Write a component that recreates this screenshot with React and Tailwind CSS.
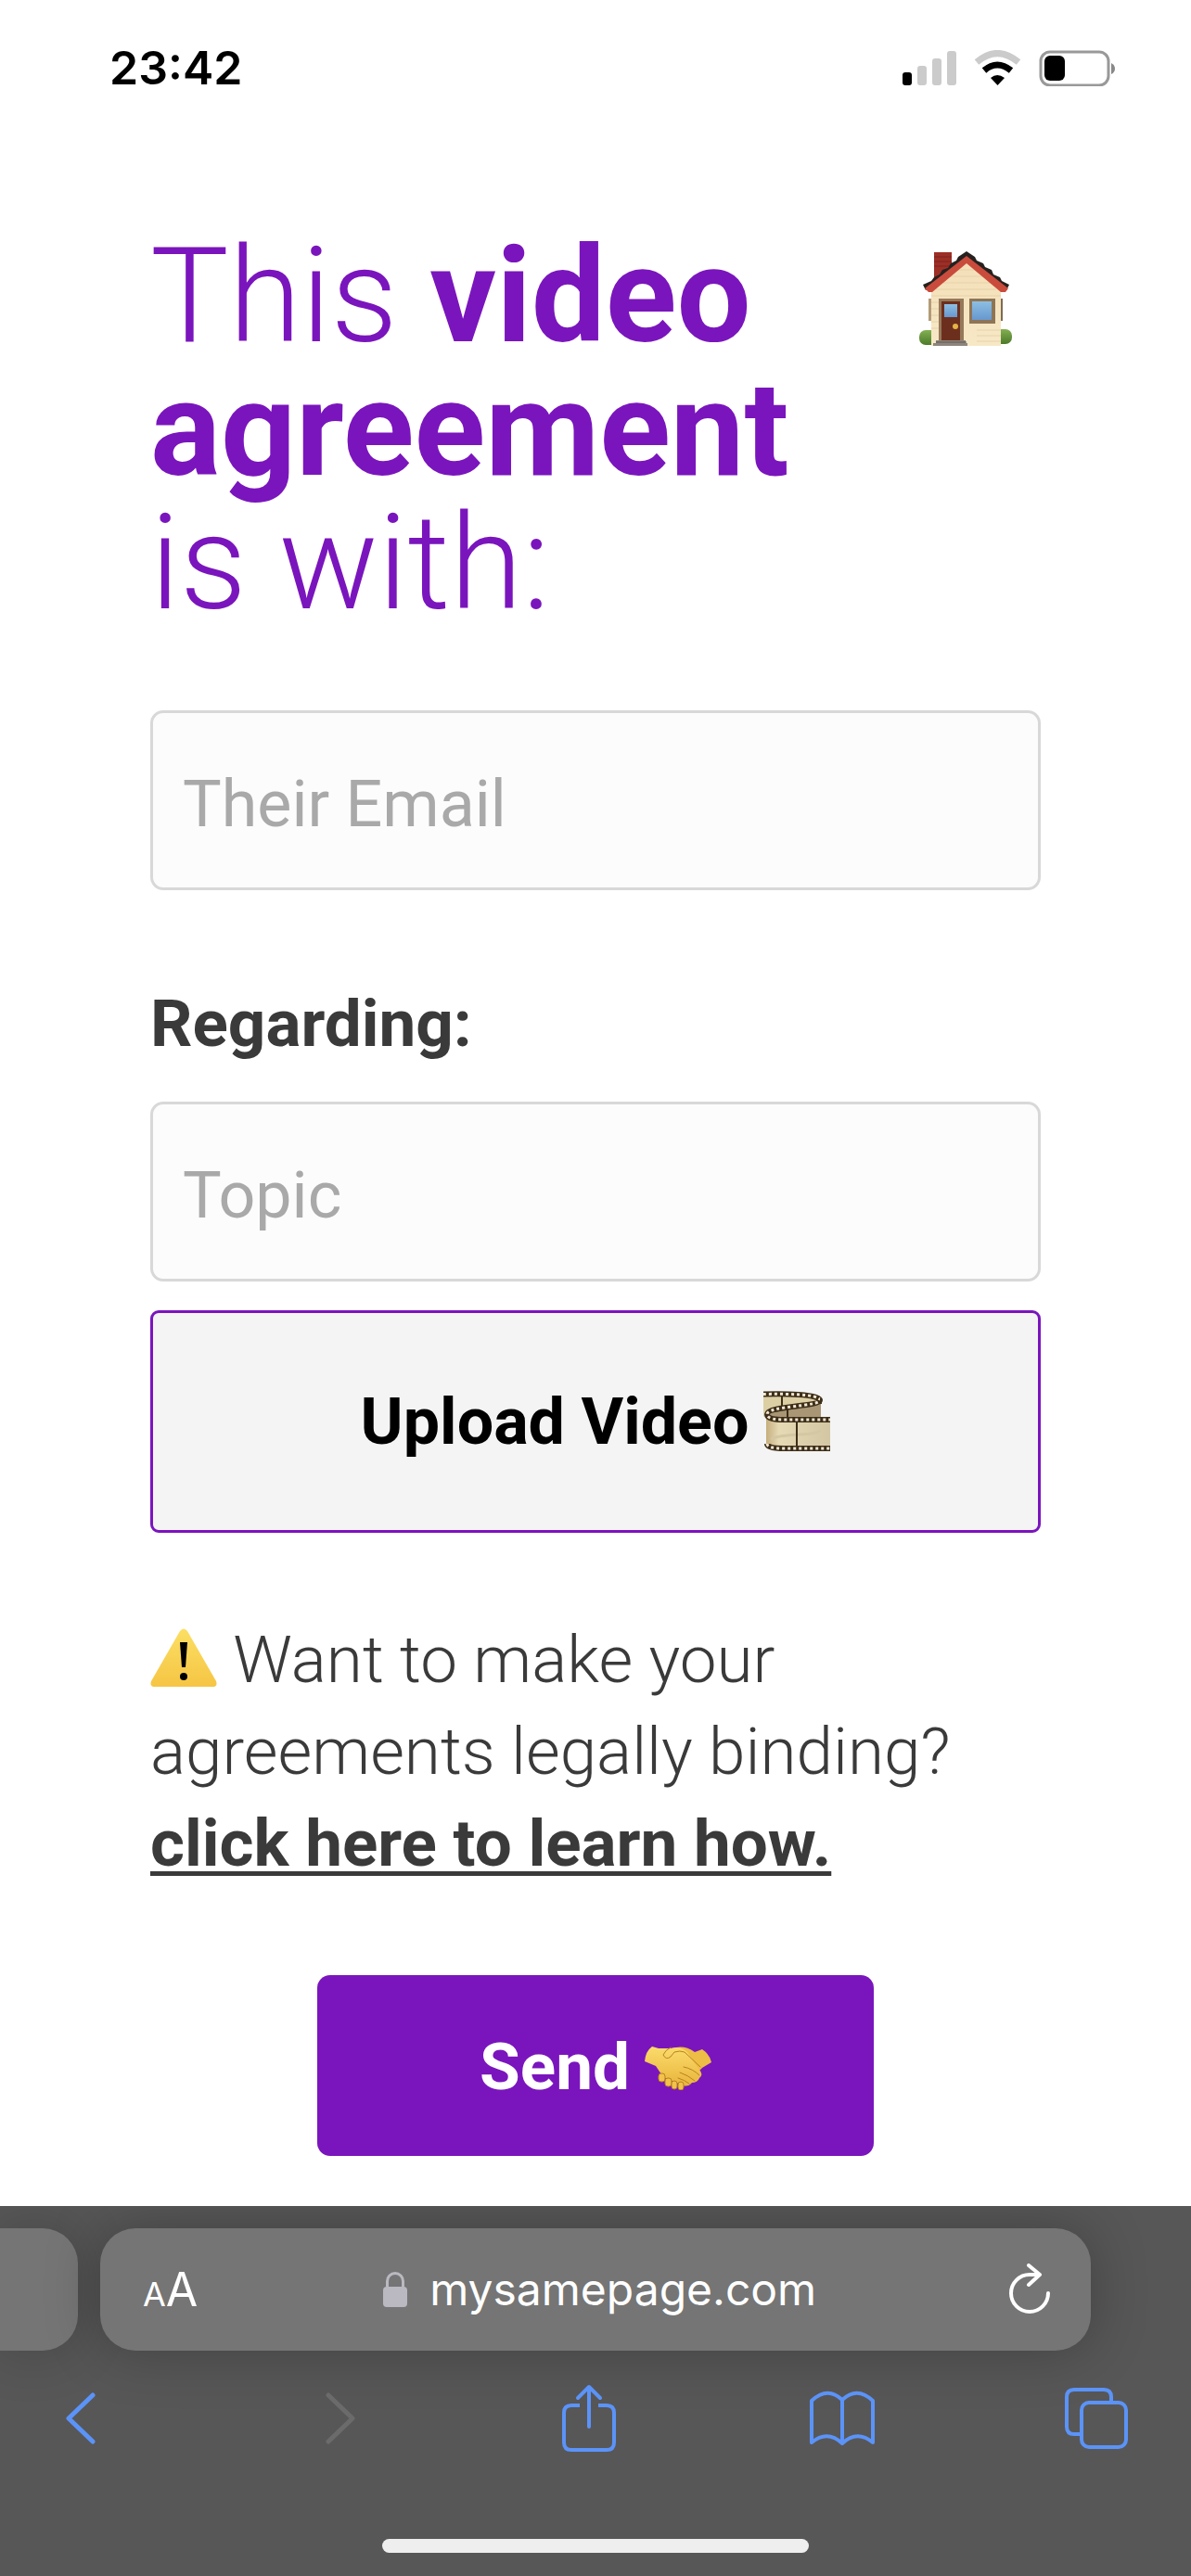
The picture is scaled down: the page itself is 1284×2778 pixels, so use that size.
import React, { useState } from "react";

function HouseIcon() {
  return (
    <svg viewBox="0 0 100 102" className="h-[102px] w-[100px]" aria-hidden="true">
      <defs>
        <linearGradient id="wall" x1="0" y1="0" x2="0" y2="1">
          <stop offset="0" stopColor="#f3dfb8" />
          <stop offset="1" stopColor="#f7e8c6" />
        </linearGradient>
        <linearGradient id="glass" x1="0" y1="0" x2="0" y2="1">
          <stop offset="0" stopColor="#8dbfe2" />
          <stop offset="1" stopColor="#6797cf" />
        </linearGradient>
        <linearGradient id="bush" x1="0" y1="0" x2="0" y2="1">
          <stop offset="0" stopColor="#83b052" />
          <stop offset="1" stopColor="#4c7a28" />
        </linearGradient>
      </defs>
      <rect x="0" y="85" width="20" height="16" rx="7" fill="url(#bush)" />
      <rect x="80" y="84" width="20" height="16" rx="7" fill="url(#bush)" />
      <rect x="10" y="51" width="4" height="24" fill="#b39b78" />
      <rect x="86" y="51" width="4" height="24" fill="#7d6b52" />
      <rect x="16" y="1" width="19" height="30" fill="#9c2f26" />
      <path d="M16 6h19M16 11h19M16 16h19" stroke="#7d221c" strokeWidth="1" />
      <path d="M51 10L13 42v60h75V42z" fill="url(#wall)" />
      <path d="M42 20h18M34 27h34M26 34h50M18 41h65M13 48h75M62 85h26M62 91h26M62 97h26M13 55h8M13 62h8M13 69h8M13 76h8M13 83h8" stroke="#e6d2a8" strokeWidth="1" />
      <path d="M51 0L42 6l-2 4-6 3-3 5-6 2-3 5-6 3-3 4-9 4 3 6L51 9l43 33 3-6-8-4-2-4-7-3-2-5-7-3-2-4-7-3-2-4z" fill="#26211f" />
      <path d="M51 5L6 40l4 4h4L51 13l37 31h5l3-4z" fill="#c94b3c" />
      <rect x="21" y="51" width="27" height="46" fill="#95795a" />
      <rect x="24" y="54" width="20" height="43" fill="#6d2f1d" />
      <rect x="27" y="57" width="14" height="14" fill="url(#glass)" />
      <circle cx="39" cy="81" r="3" fill="#e5b347" />
      <rect x="54" y="51" width="28" height="27" fill="#8d7556" />
      <rect x="57" y="54" width="21" height="20" fill="url(#glass)" />
      <path d="M18 96h32v3h2v3H15v-3h3z" fill="#8d857d" />
      <path d="M18 98h33" stroke="#5e5751" strokeWidth="1" />
    </svg>
  );
}

function FilmIcon() {
  return (
    <svg viewBox="0 0 72 66" className="h-[66px] w-[72px]" aria-hidden="true">
      <defs>
        <linearGradient id="film" x1="0" y1="0" x2="1" y2="0">
          <stop offset="0" stopColor="#c6ae7d" />
          <stop offset=".2" stopColor="#e6dab5" />
          <stop offset="1" stopColor="#d3c6a2" />
        </linearGradient>
      </defs>
      <path d="M0 3C20 1 62 2 62 12v40H4V24L0 28z" fill="#ddcfa4" />
      <path d="M6 24C20 14 62 20 62 10v38H6z" fill="#a89675" />
      <path d="M3 26C5 30 12 32 22 32h50v31H20C8 63 3 60 3 56z" fill="url(#film)" />
      <path d="M8 52C24 44 58 50 61 42" fill="none" stroke="#d4c7a3" strokeWidth="3" />
      <path d="M0 3.500C20 3 61 3 61 10S4 16 4 25c0 5 8 6 18 6h50" fill="none" stroke="#3d2e18" strokeWidth="6" />
      <path d="M0 3.500C20 3 61 3 61 10S4 16 4 25c0 5 8 6 18 6h50" fill="none" stroke="#f0e8d5" strokeWidth="3" strokeDasharray="3 3" />
      <path d="M4 57c0 4 8 5 18 5h50" fill="none" stroke="#3d2e18" strokeWidth="6" />
      <path d="M4 57c0 4 8 5 18 5h50" fill="none" stroke="#f0e8d5" strokeWidth="3" strokeDasharray="3 3" />
      <path d="M36 34v26M20 6v10M26 20v8M62 8v6" stroke="#3d2e18" strokeWidth="2" />
    </svg>
  );
}

function WarningIcon() {
  return (
    <svg viewBox="0 0 72 64" className="inline-block h-[64px] w-[72px] align-[-6px]" aria-hidden="true">
      <defs>
        <linearGradient id="warn" x1="0" y1="0" x2="0" y2="1">
          <stop offset="0" stopColor="#fbdf63" />
          <stop offset="1" stopColor="#f6c544" />
        </linearGradient>
      </defs>
      <path d="M32 3q4-5 8 0l31 54q2 6-4 6H5q-6 0-4-6z" fill="url(#warn)" />
      <path d="M32 15h8l-2 27h-4z" fill="#000" />
      <circle cx="36" cy="52" r="4" fill="#000" />
    </svg>
  );
}

function HandshakeIcon() {
  return (
    <svg viewBox="0 0 72 48" className="h-[48px] w-[72px]" aria-hidden="true">
      <defs>
        <linearGradient id="hand" x1="0" y1="0" x2="0" y2="1">
          <stop offset="0" stopColor="#fbdb6c" />
          <stop offset="1" stopColor="#e9b53c" />
        </linearGradient>
      </defs>
      <path d="M34 2q10-2 20 5l8-3q8 5 10 14l-10 6-8 8-26-8z" fill="#eebd45" />
      <path d="M0 17Q1 6 8 1l7 2h13q10-3 18 4l12 18q6 6 1 10-2 5-8 5-4 5-10 3L20 34 12 22z" fill="url(#hand)" />
      <g fill="#f2c24b" stroke="#b9811f" strokeWidth="1">
        <rect x="15" y="30" width="7" height="9" rx="3" />
        <rect x="22" y="35" width="7" height="9" rx="3" />
        <rect x="29" y="38" width="6" height="9" rx="3" />
        <rect x="36" y="39" width="6" height="9" rx="3" />
      </g>
      <path d="M28 2q-6 3-8 8 3 6 8 2l4-5q6-2 11 0l17 16M42 23q10 2 17 9M38 29q9 3 16 9M36 35q7 2 12 6" fill="none" stroke="#b9811f" strokeWidth="1" strokeLinecap="round" />
    </svg>
  );
}

function StatusBar() {
  return (
    <div className="flex items-center justify-between pl-[118px] pr-[82px] pt-[42px] font-['Inter',sans-serif] text-black">
      <span className="text-[50px] font-semibold leading-[62px]">23:42</span>
      <svg viewBox="0 0 229 39" className="h-[39px] w-[229px]" aria-hidden="true">
        <rect x="0" y="24" width="10" height="14" rx="3" />
        <g fill="#cbcbcb">
          <rect x="16" y="17" width="10" height="21" rx="3" />
          <rect x="32" y="9" width="10" height="29" rx="3" />
          <rect x="48" y="1" width="10" height="37" rx="3" />
        </g>
        <path d="M80 13Q102 -6 125 13" fill="none" stroke="#cbcbcb" strokeWidth="7" />
        <path d="M88 22Q102 10 117 22" fill="none" stroke="#000" strokeWidth="7" />
        <path d="M95 30Q102 24 110 30L102.500 38z" />
        <rect x="149" y="2" width="73" height="36" rx="10" fill="none" stroke="#999" strokeWidth="3" />
        <rect x="153" y="6" width="22" height="27" rx="6" />
        <path d="M225 14q4 2 4 6t-4 6z" fill="#888" />
      </svg>
    </div>
  );
}

function BrowserBar() {
  return (
    <div className="mt-[54px] flex-1 overflow-hidden bg-[#575757] pt-6 font-['Inter',sans-serif] text-white">
      <div className="flex gap-6 pr-[108px]">
        <div className="h-[132px] w-[84px] shrink-0 rounded-r-[38px] bg-[#757575] shadow-[0_0_60px_rgba(0,0,0,0.2)]" />
        <div className="flex h-[132px] flex-1 items-center justify-between rounded-[38px] bg-[#757575] pl-[46px] pr-[44px] shadow-[0_0_60px_rgba(0,0,0,0.25)]">
          <button aria-label="Page settings" className="flex items-baseline">
            <span className="text-[36px]">A</span>
            <span className="text-[50px]">A</span>
          </button>
          <div className="mr-2 flex items-center gap-6">
            <svg viewBox="0 0 26 38" className="h-[38px] w-[26px]" aria-hidden="true">
              <rect x="0" y="16" width="26" height="22" rx="4" fill="#bab9c1" />
              <path d="M4.500 17V10a8.500 8.500 0 0 1 17 0v7" fill="none" stroke="#bab9c1" strokeWidth="3" />
            </svg>
            <a href="#" className="text-[48px] leading-[60px]">mysamepage.com</a>
          </div>
          <button aria-label="Reload">
            <svg viewBox="0 0 44 56" className="h-[56px] w-[44px]" fill="none" stroke="currentColor" strokeWidth="4" strokeLinecap="round" strokeLinejoin="round">
              <path d="M42 32A20 20 0 1 1 22 12h10" />
              <path d="M21 2l12 10-12 11" />
            </svg>
          </button>
        </div>
      </div>

      <nav className="mt-[36px] flex items-center justify-between pl-[51px] pr-[66px]">
        <button aria-label="Back" className="flex w-[72px] justify-center text-[#5b93f8]">
          <svg viewBox="0 0 32 56" className="h-[56px] w-[32px]" fill="none" stroke="currentColor" strokeWidth="5" strokeLinecap="round" strokeLinejoin="round">
            <path d="M29 3L3 28l26 25" />
          </svg>
        </button>
        <button aria-label="Forward" className="flex w-[72px] justify-center text-[#6b6b6b]">
          <svg viewBox="-12 0 44 56" className="h-[56px] w-[44px]" fill="none" stroke="currentColor" strokeWidth="5" strokeLinecap="round" strokeLinejoin="round">
            <path d="M3 3l26 25L3 53" />
          </svg>
        </button>
        <button aria-label="Share" className="flex w-[72px] justify-center text-[#5b93f8]">
          <svg viewBox="0 0 58 74" className="h-[74px] w-[58px]" fill="none" stroke="currentColor" strokeWidth="4" strokeLinecap="round" strokeLinejoin="round">
            <path d="M19 23h-9q-8 0-8 8v32q0 8 8 8h38q8 0 8-8V31q0-8-8-8h-9" strokeLinecap="butt" />
            <path d="M29 46V3M17 15L29 3l12 12" />
          </svg>
        </button>
        <button aria-label="Bookmarks" className="flex w-[72px] justify-center text-[#5b93f8]">
          <svg viewBox="0 0 72 60" className="h-[60px] w-[72px]" fill="none" stroke="currentColor" strokeWidth="4" strokeLinecap="round" strokeLinejoin="round">
            <path d="M36 10v47Q20 42 3 56V11Q20-5 36 10Q52-5 69 11v45Q52 42 36 57" />
          </svg>
        </button>
        <button aria-label="Tabs" className="flex w-[72px] justify-center text-[#5b93f8]">
          <svg viewBox="0 0 68 68" className="h-[68px] w-[68px]" fill="none" stroke="currentColor" strokeWidth="4">
            <rect x="18" y="17" width="48" height="48" rx="8" />
            <path d="M18 51h-8q-8 0-8-8V11q0-8 8-8h32q8 0 8 8v6" />
          </svg>
        </button>
      </nav>
      <div className="mx-auto mt-[93px] h-[15px] w-[460px] rounded-full bg-[#eeeeee]" />
    </div>
  );
}

function App() {
  const [email, setEmail] = useState("");
  const [topic, setTopic] = useState("");

  return (
    <div className="flex min-h-screen flex-col bg-white font-['Roboto',sans-serif] text-[#3a3a3a]">
      <StatusBar />

      <form onSubmit={(e) => e.preventDefault()} className="flex flex-col px-[162px] pt-[144px]">
        <div className="flex items-start justify-between pr-[31px]">
          <h1 className="text-[142px] font-light leading-[144px] text-[#7a15bd]">
            <span className="block">
              This <b className="font-bold">video</b>
            </span>
            <b className="block font-bold">agreement</b>
            <span className="block">is with:</span>
          </h1>
          <a href="#" aria-label="Home" className="mt-[23px]">
            <HouseIcon />
          </a>
        </div>

        <input
          type="email"
          aria-label="Their Email"
          placeholder="Their Email"
          value={email}
          onChange={(e) => setEmail(e.target.value)}
          className="mt-[86px] h-[194px] w-full rounded-[14px] border-[3px] border-[#d8d8d8] bg-[#fcfcfc] px-[32px] pt-2 text-[70px] placeholder:text-[#a9a9a9]"
        />

        <label htmlFor="topic" className="mt-[94px] text-[71px] font-bold leading-[100px]">
          Regarding:
        </label>
        <input
          id="topic"
          type="text"
          placeholder="Topic"
          value={topic}
          onChange={(e) => setTopic(e.target.value)}
          className="mt-[34px] h-[194px] w-full rounded-[14px] border-[3px] border-[#d8d8d8] bg-[#fcfcfc] px-[32px] pt-2 text-[70px] placeholder:text-[#a9a9a9]"
        />
        <button
          type="button"
          className="mt-[31px] flex h-[240px] w-full items-center justify-center gap-4 rounded-[9px] border-[3px] border-[#7a15bd] bg-[#f4f4f4] text-[70px] font-bold text-black"
        >
          Upload Video
          <FilmIcon />
        </button>

        <p className="mt-[87px] text-[71px] font-light leading-[99px]">
          <WarningIcon /> Want to make your
          <br />
          agreements legally binding?
          <br />
          <a href="#" className="font-bold underline decoration-[5px] underline-offset-[6px]">
            click here to learn how.
          </a>
        </p>

        <button
          type="submit"
          className="mx-auto mt-[93px] flex h-[195px] w-[600px] items-center justify-center gap-4 rounded-[14px] bg-[#7a15bd] pt-1 text-[71px] font-bold text-white"
        >
          Send
          <HandshakeIcon />
        </button>
      </form>

      <BrowserBar />
    </div>
  );
}

export default App;
